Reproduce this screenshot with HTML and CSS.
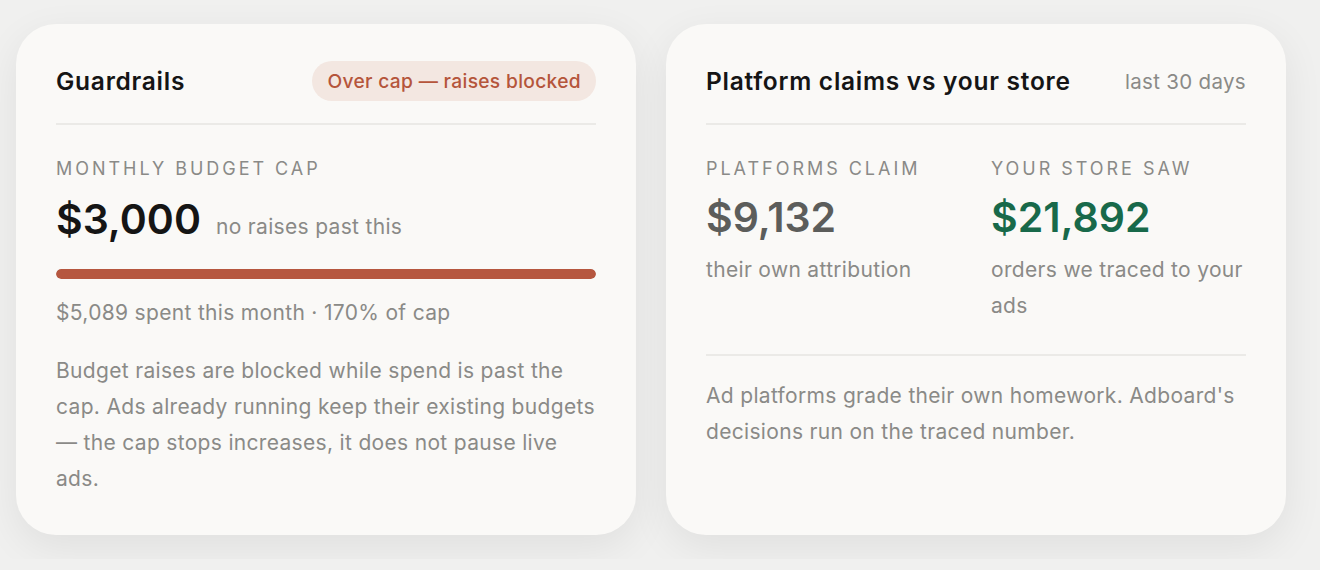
FILE: index.html
```html
<!DOCTYPE html>
<html lang="en">
<head>
    <meta charset="UTF-8">
    <meta name="viewport" content="width=device-width, initial-scale=1.0">
    <title>Adboard - Guardrails</title>
    <link rel="stylesheet" href="styles.css">
</head>
<body>
    <div class="cards">
        <section class="card">
            <header class="card-head">
                <h2 class="card-title">Guardrails</h2>
                <span class="badge">Over cap — raises blocked</span>
            </header>

            <div class="label">Monthly budget cap</div>
            <div class="cap-row">
                <span class="big-number">$3,000</span>
                <span class="cap-note">no raises past this</span>
            </div>
            <div class="bar"><div class="bar-fill" style="width: 100%"></div></div>
            <div class="spent">$5,089 spent this month · 170% of cap</div>
            <p class="body-text">Budget raises are blocked while spend is past the cap. Ads already running keep their existing budgets — the cap stops increases, it does not pause live ads.</p>
        </section>

        <section class="card">
            <header class="card-head">
                <h2 class="card-title">Platform claims vs your store</h2>
                <span class="period">last 30 days</span>
            </header>

            <div class="compare">
                <div class="stat">
                    <div class="label">Platforms claim</div>
                    <div class="big-number muted">$9,132</div>
                    <div class="stat-note">their own attribution</div>
                </div>
                <div class="stat">
                    <div class="label">Your store saw</div>
                    <div class="big-number green">$21,892</div>
                    <div class="stat-note">orders we traced to your ads</div>
                </div>
            </div>

            <p class="body-text footer-text">Ad platforms grade their own homework. Adboard's decisions run on the traced number.</p>
        </section>
    </div>
</body>
</html>
```

FILE: styles.css
```css
body {
    font-family: Inter, "Open Sans", sans-serif;
    margin: 0;
    padding: 0;
    background: #f0f0ef;
    color: #151515;
    letter-spacing: 0.02em;
}

.cards {
    display: flex;
    gap: 30px;
    padding: 24px 16px;
}

.card {
    width: 620px;
    height: 511px;
    box-sizing: border-box;
    padding: 37px 40px;
    background: #faf9f7;
    border-radius: 40px;
    box-shadow: 0 12px 40px rgba(0, 0, 0, 0.07);
}

.card-head {
    display: flex;
    justify-content: space-between;
    align-items: center;
    height: 40px;
    padding-bottom: 22px;
    border-bottom: 2px solid #ebeae7;
    margin-bottom: 32px;
}

.card-title {
    margin: 0;
    font-size: 24.5px;
    font-weight: 600;
    letter-spacing: 0.03em;
    color: #151515;
}

.badge {
    background: #f3e7e1;
    color: #b5553b;
    font-size: 19.2px;
    font-weight: 500;
    padding: 8px 15px;
    border-radius: 20px;
}

.period {
    font-size: 20.5px;
    color: #8a8a87;
}

.label {
    font-size: 18px;
    letter-spacing: 0.165em;
    text-transform: uppercase;
    color: #8a8a87;
    line-height: 24px;
}

.cap-row {
    display: flex;
    align-items: baseline;
    gap: 15px;
    margin-top: 12px;
}

.big-number {
    font-size: 41px;
    font-weight: 600;
    line-height: 52px;
    letter-spacing: 0;
}

.big-number.muted {
    color: #5c5d5b;
    margin-top: 10px;
}

.big-number.green {
    color: #18694a;
    margin-top: 10px;
}

.cap-note {
    font-size: 21px;
    font-weight: 400;
    color: #8a8a87;
}

.bar {
    margin-top: 24px;
    height: 10px;
    border-radius: 5px;
    background: #ebeae7;
    overflow: hidden;
}

.bar-fill {
    height: 100%;
    background: #b6573f;
    border-radius: 5px;
}

.spent {
    margin-top: 20px;
    font-size: 21px;
    line-height: 28px;
    color: #8a8a87;
}

.body-text {
    margin: 26px 0 0;
    font-size: 21px;
    line-height: 36px;
    color: #8a8a87;
}

.compare {
    display: grid;
    grid-template-columns: 1fr 1fr;
    gap: 30px;
    padding-bottom: 30px;
    border-bottom: 2px solid #ebeae7;
}

.stat-note {
    margin-top: 9px;
    font-size: 21px;
    line-height: 36px;
    color: #8a8a87;
}

.footer-text {
    margin-top: 22px;
}
```
